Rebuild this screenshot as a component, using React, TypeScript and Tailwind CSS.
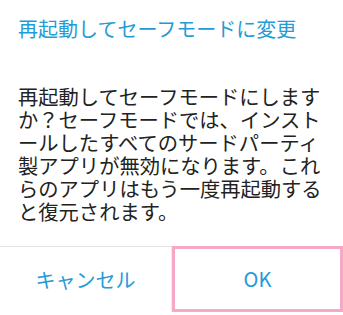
const font = { fontFamily: '"Noto Sans CJK JP", "Noto Sans", sans-serif' }

const lines = [
  '再起動してセーフモードにします',
  'か？セーフモードでは、インスト',
  'ールしたすべてのサードパーティ',
  '製アプリが無効になります。これ',
  'らのアプリはもう一度再起動する',
  'と復元されます。',
]

export default function App() {
  return (
    <div className="w-[343px] h-[315px] bg-white flex flex-col overflow-hidden" style={font}>
      {/* title */}
      <div className="pt-[15px] pl-[18px] text-[20px] leading-[28px] text-[#239bd6]">
        再起動してセーフモードに変更
      </div>

      {/* message */}
      <div className="mt-[42px] pl-[18px] text-[20.3px] leading-[23px] text-[#222222]">
        {lines.map((l) => (
          <div key={l} className="whitespace-nowrap">{l}</div>
        ))}
      </div>

      {/* buttons */}
      <div className="mt-[23px] flex h-[66px] border-t border-[#e3e3e3]">
        <button className="w-[172px] flex items-center justify-center text-[20px] text-[#239bd6] border-r border-[#eeeeee]">
          キャンセル
        </button>
        <button className="flex-1 -mt-px flex items-center justify-center text-[20px] text-[#239bd6] border-[3px] border-[#f6a8c6]">
          OK
        </button>
      </div>
    </div>
  )
}
